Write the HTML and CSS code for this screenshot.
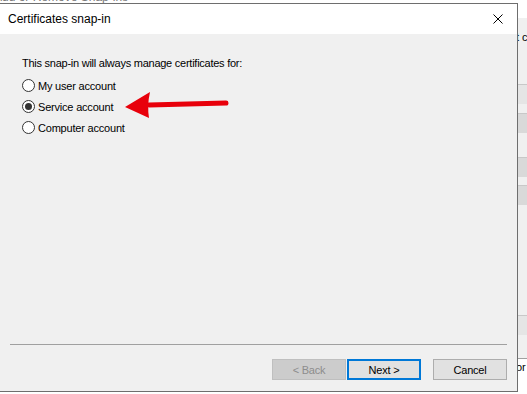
FILE: index.html
```html
<!DOCTYPE html>
<html lang="en">
<head>
  <meta charset="UTF-8">
  <title>Certificates snap-in</title>
  <link rel="stylesheet" href="styles.css">
</head>
<body>
  <div class="screen">
    <div class="main">
      <div class="parent-title"><span>Add or Remove Snap-ins</span></div>
      <div class="dialog">
        <div class="titlebar">
          <span class="title">Certificates snap-in</span>
          <svg class="close" width="10" height="10" viewBox="0 0 10 10">
            <path d="M0.5 0.5 L9.5 9.5 M9.5 0.5 L0.5 9.5" stroke="#000" stroke-width="1" fill="none"/>
          </svg>
        </div>
        <div class="content">
          <div class="page">
            <p class="intro">This snap-in will always manage certificates for:</p>
            <label class="option"><span class="radio"></span>My user account</label>
            <label class="option"><span class="radio checked"></span>Service account</label>
            <label class="option"><span class="radio"></span>Computer account</label>
            <svg class="arrow" width="110" height="32" viewBox="0 0 110 32">
              <path d="M26 15 L103 13" stroke="#e8000b" stroke-width="5" stroke-linecap="round"/>
              <path d="M2 17 L27 2 Q24 15 26 28 Z" fill="#e8000b"/>
            </svg>
          </div>
          <div class="separator"></div>
          <div class="buttons">
            <button class="btn disabled">&lt; Back</button>
            <button class="btn default">Next &gt;</button>
            <button class="btn cancel">Cancel</button>
          </div>
        </div>
      </div>
    </div>
    <div class="behind">
      <div class="b-white"></div>
      <div class="b-text">t c</div>
      <div class="b-gap h32"></div>
      <div class="b-row light"></div>
      <div class="b-gap h9"></div>
      <div class="b-row"></div>
      <div class="b-gap h24"></div>
      <div class="b-row"></div>
      <div class="b-gap h8"></div>
      <div class="b-row"></div>
      <div class="b-gap h110"></div>
      <div class="b-row light"></div>
      <div class="b-gap h23"></div>
      <div class="b-foot">or</div>
    </div>
  </div>
</body>
</html>
```

FILE: styles.css
```css
body {
  margin: 0;
  font-family: 'Liberation Sans', Arial, sans-serif;
  background-color: #fff;
}
.screen {
  display: flex;
  width: 527px;
  height: 394px;
  overflow: hidden;
}
.main {
  width: 518px;
  flex-shrink: 0;
}
.parent-title {
  height: 3px;
  overflow: hidden;
}
.parent-title span {
  display: block;
  margin: -9px 0 0 -6px;
  font-size: 12px;
  line-height: 12px;
  color: #7a7a7a;
}
.dialog {
  height: 387px;
  border-top: 1px solid #6e6e6e;
  border-bottom: 1px solid #6e6e6e;
  border-right: 1px solid #6e6e6e;
  display: flex;
  flex-direction: column;
  box-sizing: content-box;
  width: 517px;
}
.titlebar {
  height: 30px;
  background-color: #fff;
  display: flex;
  align-items: center;
  justify-content: space-between;
  padding: 0 14px 0 8px;
}
.title {
  font-size: 12px;
  color: #000;
  margin-top: -1px;
}
.close {
  margin-top: -1px;
}
.content {
  flex: 1;
  background-color: #f0f0f0;
  display: flex;
  flex-direction: column;
}
.page {
  flex: 1;
  padding: 22px 0 0 22px;
  position: relative;
}
.intro {
  margin: 0 0 5px;
  font-size: 11px;
  line-height: 14px;
  letter-spacing: -0.25px;
  color: #000;
}
.option {
  display: flex;
  align-items: center;
  height: 21px;
  font-size: 11px;
  letter-spacing: -0.2px;
  color: #000;
}
.radio {
  width: 11px;
  height: 11px;
  border: 1px solid #333;
  border-radius: 50%;
  background-color: #fff;
  margin-right: 3px;
  display: flex;
  align-items: center;
  justify-content: center;
}
.radio.checked::after {
  content: '';
  width: 7px;
  height: 7px;
  border-radius: 50%;
  background-color: #333;
}
.arrow {
  position: absolute;
  left: 123px;
  top: 56px;
}
.separator {
  margin: 0 10px;
  height: 1px;
  background-color: #a0a0a0;
}
.buttons {
  display: flex;
  justify-content: flex-end;
  padding: 14px 10px 11px 0;
}
.btn {
  width: 74px;
  height: 21px;
  padding: 0;
  font-family: 'Liberation Sans', Arial, sans-serif;
  font-size: 11px;
  letter-spacing: -0.2px;
  color: #000;
  background-color: #e1e1e1;
  border: 1px solid #adadad;
  border-radius: 0;
  box-sizing: border-box;
}
.btn.disabled {
  background-color: #cccccc;
  border-color: #bfbfbf;
  color: #8d8d8d;
}
.btn.default {
  margin-left: 1px;
  border: 2px solid #0078d7;
}
.btn.cancel {
  margin-left: 12px;
}
.behind {
  width: 9px;
  flex-shrink: 0;
  display: flex;
  flex-direction: column;
  background-color: #f0f0f0;
  overflow: hidden;
}
.b-white {
  height: 18px;
  background-color: #fff;
}
.b-text {
  height: 12px;
  margin-top: 13px;
  font-size: 11px;
  line-height: 12px;
  white-space: nowrap;
  margin-left: -2px;
}
.b-row {
  height: 20px;
  background-color: #d9d9d9;
  border-top: 1px solid #c8c8c8;
  box-sizing: border-box;
}
.b-row.light {
  background-color: #e5e5e5;
}
.h32 { height: 41px; }
.h9 { height: 9px; }
.h24 { height: 24px; }
.h8 { height: 8px; }
.h110 { height: 110px; }
.h23 { height: 23px; }
.b-foot {
  flex: 1;
  border-top: 1px solid #a0a0a0;
  background-color: #fff;
  font-size: 11px;
  padding-top: 2px;
  margin-left: -2px;
}
```
